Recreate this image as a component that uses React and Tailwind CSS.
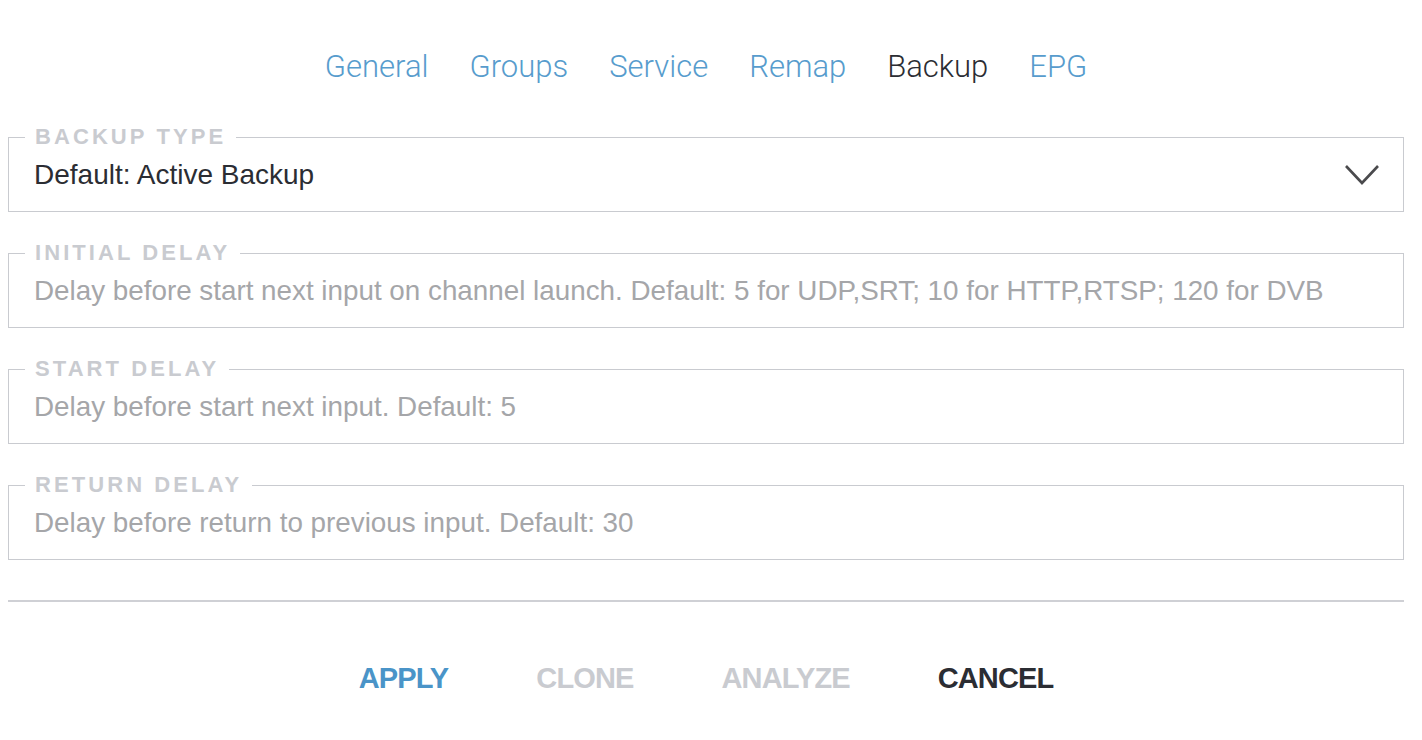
import React, { useState } from 'react';

const tabs = ['General', 'Groups', 'Service', 'Remap', 'Backup', 'EPG'];

const fields = [
  { label: 'INITIAL DELAY', placeholder: 'Delay before start next input on channel launch. Default: 5 for UDP,SRT; 10 for HTTP,RTSP; 120 for DVB' },
  { label: 'START DELAY', placeholder: 'Delay before start next input. Default: 5' },
  { label: 'RETURN DELAY', placeholder: 'Delay before return to previous input. Default: 30' },
];

const Field = ({ label, children }) => (
  <fieldset className="border border-[#c9cbd0] pl-[16px] pr-[16px] h-[86px] -mt-[10px]">
    <legend className="px-[10px] text-[22px] leading-[22px] font-bold tracking-[0.14em] text-[#c9cbd0]">{label}</legend>
    {children}
  </fieldset>
);

const App = () => {
  const [active, setActive] = useState('Backup');

  return (
    <div className="w-[1422px] h-[740px] bg-white pl-2 pr-[18px] font-['Liberation_Sans',Arial,sans-serif]">
      <div className="flex items-start justify-center gap-[41px] pt-[47px] h-[136px] font-['Roboto',sans-serif] font-light text-[31px] leading-[40px]">
        {tabs.map((t) => (
          <button
            key={t}
            onClick={() => setActive(t)}
            className={t === active ? 'text-[#2b2d33]' : 'text-[#579ccd]'}
          >
            {t}
          </button>
        ))}
      </div>

      <div className="flex flex-col gap-[40px]">
        <Field label="BACKUP TYPE">
          <div className="flex items-center justify-between h-[64px] pl-[9px] pb-[10px]">
            <span className="text-[28px] text-[#2b2d33]">Default: Active Backup</span>
            <svg width="36" height="22" viewBox="0 0 36 22" className="mr-[7px]">
              <path d="M2 2 L18 19 L34 2" fill="none" stroke="#4a4a4d" strokeWidth="2.6" />
            </svg>
          </div>
        </Field>
        {fields.map((f) => (
          <Field key={f.label} label={f.label}>
            <input
              className="w-full h-[64px] pl-[9px] pb-[10px] text-[27.8px] text-[#2b2d33] placeholder:text-[#a5a6a9] outline-none bg-transparent"
              placeholder={f.placeholder}
            />
          </Field>
        ))}
      </div>

      <div className="mt-[40px] border-t-2 border-[#cfd0d5]" />

      <div className="flex justify-center gap-[88px] pt-[55px] text-[29px] font-bold tracking-[-0.03em]">
        <button className="text-[#4a94c8]">APPLY</button>
        <button className="text-[#c9cbd0]">CLONE</button>
        <button className="text-[#c9cbd0]">ANALYZE</button>
        <button className="text-[#2b2d33]">CANCEL</button>
      </div>
    </div>
  );
};

export default App;
